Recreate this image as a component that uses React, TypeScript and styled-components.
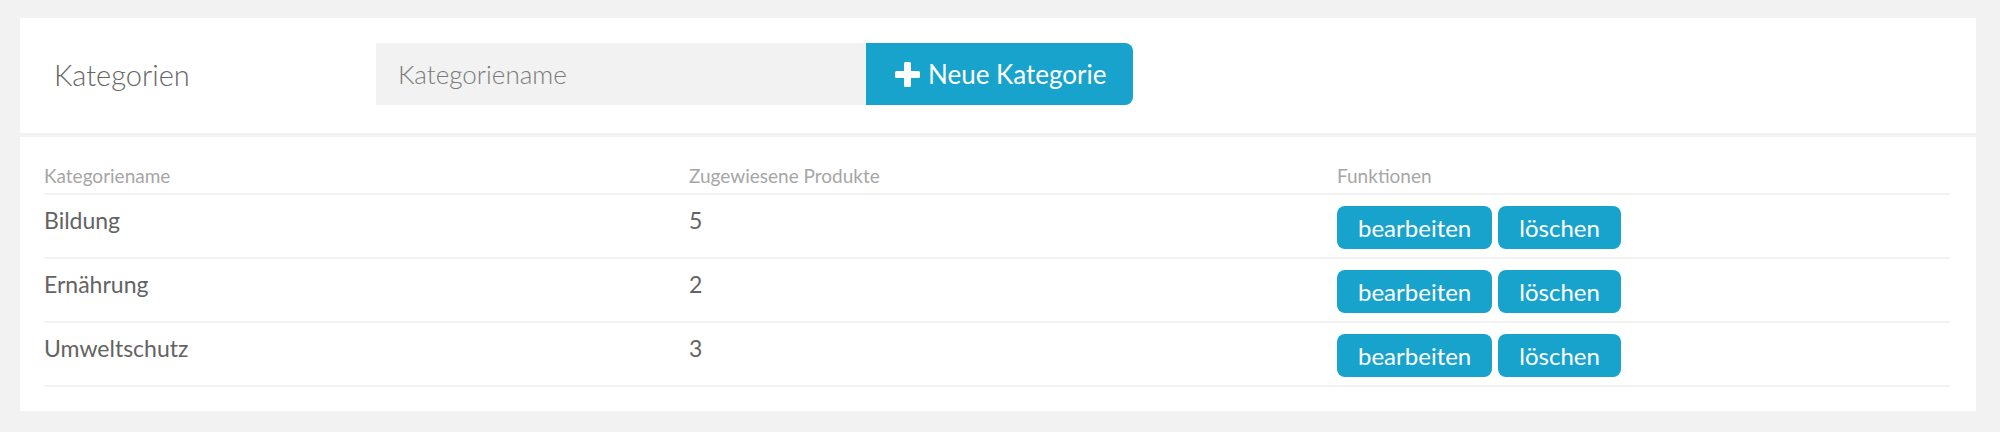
import styled, { createGlobalStyle } from 'styled-components';

const GlobalStyle = createGlobalStyle`
  html, body {
    margin: 0;
    padding: 0;
    background: #f2f2f2;
  }
  body {
    font-family: Lato, "Open Sans", sans-serif;
  }
`;

type Category = {
    name: string;
    products: number;
};

const categories: Category[] = [
    { name: 'Bildung', products: 5 },
    { name: 'Ernährung', products: 2 },
    { name: 'Umweltschutz', products: 3 },
];

function PlusIcon(){
    return (
        <svg width="25" height="25" viewBox="0 0 25 25" aria-hidden="true">
            <path
                d="M9 1.5 Q9 0 10.5 0 H14.5 Q16 0 16 1.5 V9 H23.5 Q25 9 25 10.5 V14.5 Q25 16 23.5 16 H16 V23.5 Q16 25 14.5 25 H10.5 Q9 25 9 23.5 V16 H1.5 Q0 16 0 14.5 V10.5 Q0 9 1.5 9 H9 Z"
                fill="#ffffff"
            />
        </svg>
    );
}

export default function App(){
    return (
        <Page>
            <GlobalStyle />
            <TopCard>
                <Title>Kategorien</Title>
                <NameInput type="text" placeholder="Kategoriename" />
                <AddButton type="button">
                    <PlusIcon />
                    <span>Neue Kategorie</span>
                </AddButton>
            </TopCard>
            <TableCard>
                <HeadRow>
                    <HeadCell>Kategoriename</HeadCell>
                    <HeadCell>Zugewiesene Produkte</HeadCell>
                    <HeadCell>Funktionen</HeadCell>
                </HeadRow>
                {categories.map(cat => (
                    <Row key={cat.name}>
                        <Cell>{cat.name}</Cell>
                        <Cell>{cat.products}</Cell>
                        <Actions>
                            <SmallButton type="button">bearbeiten</SmallButton>
                            <SmallButton type="button">löschen</SmallButton>
                        </Actions>
                    </Row>
                ))}
            </TableCard>
        </Page>
    );
}

const Page = styled.div`
    padding: 18px 24px 20px 20px;
`;

const TopCard = styled.section`
    display: flex;
    align-items: center;
    background: #ffffff;
    padding: 25px 0 28px 34px;
`;

const Title = styled.h1`
    flex: 0 0 322px;
    margin: 0;
    font-size: 29px;
    font-weight: 300;
    color: #666666;
`;

const NameInput = styled.input`
    box-sizing: border-box;
    width: 490px;
    height: 62px;
    border: none;
    outline: none;
    background: #f2f2f2;
    padding: 0 22px;
    font-family: inherit;
    font-size: 26px;
    font-weight: 300;
    color: #555555;

    &::placeholder {
        color: #7a7a7a;
    }
`;

const AddButton = styled.button`
    box-sizing: border-box;
    display: flex;
    align-items: center;
    gap: 8px;
    width: 267px;
    height: 62px;
    padding: 0 0 0 29px;
    border: none;
    border-radius: 0 8px 8px 0;
    background: #18a3cd;
    color: #ffffff;
    font-family: inherit;
    font-size: 26px;
    cursor: pointer;
`;

const TableCard = styled.section`
    margin-top: 4px;
    background: #ffffff;
    padding: 0 26px 24px 24px;
`;

const Columns = styled.div`
    display: grid;
    grid-template-columns: 645px 648px 1fr;
    border-bottom: 2px solid #f2f2f2;
`;

const HeadRow = styled(Columns)`
    height: 56px;
    align-items: end;
`;

const HeadCell = styled.div`
    font-size: 19px;
    color: #a6a6a6;
    line-height: 24px;
    padding-bottom: 5px;
`;

const Row = styled(Columns)`
    height: 62px;
    align-items: center;
`;

const Cell = styled.div`
    font-size: 23px;
    color: #636363;
    line-height: 28px;
    padding-bottom: 13px;
`;

const Actions = styled.div`
    display: flex;
    gap: 6px;
    padding-top: 3px;
`;

const SmallButton = styled.button`
    height: 43px;
    padding: 0 21px;
    border: none;
    border-radius: 8px;
    background: #18a3cd;
    color: #ffffff;
    font-family: inherit;
    font-size: 24px;
    cursor: pointer;
`;
